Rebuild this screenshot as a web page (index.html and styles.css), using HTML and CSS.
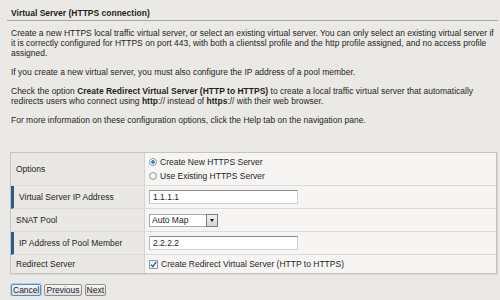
FILE: index.html
```html
<!DOCTYPE html>
<html lang="en">
<head>
    <meta charset="UTF-8">
    <title>Virtual Server (HTTPS connection)</title>
    <link rel="stylesheet" href="styles.css">
</head>
<body>
    <div class="section">
        <h1 class="section-title">Virtual Server (HTTPS connection)</h1>
        <div class="intro">
            <p>Create a new HTTPS local traffic virtual server, or select an existing virtual server. You can only select an existing virtual server if it is correctly configured for HTTPS on port 443, with both a clientssl profile and the http profile assigned, and no access profile assigned.</p>
            <p>If you create a new virtual server, you must also configure the IP address of a pool member.</p>
            <p>Check the option <b>Create Redirect Virtual Server (HTTP to HTTPS)</b> to create a local traffic virtual server that automatically redirects users who connect using <b>http</b>:// instead of <b>https</b>:// with their web browser.</p>
            <p>For more information on these configuration options, click the Help tab on the navigation pane.</p>
        </div>

        <table class="settings">
            <tr class="row-options">
                <td class="label">Options</td>
                <td class="value">
                    <label class="radio-line"><span class="radio checked"></span>Create New HTTPS Server</label>
                    <label class="radio-line"><span class="radio"></span>Use Existing HTTPS Server</label>
                </td>
            </tr>
            <tr>
                <td class="label required">Virtual Server IP Address</td>
                <td class="value"><input type="text" class="text-input" value="1.1.1.1"></td>
            </tr>
            <tr>
                <td class="label">SNAT Pool</td>
                <td class="value">
                    <div class="select-box">
                        <select>
                            <option>Auto Map</option>
                        </select>
                        <span class="select-arrow"></span>
                    </div>
                </td>
            </tr>
            <tr>
                <td class="label required">IP Address of Pool Member</td>
                <td class="value"><input type="text" class="text-input" value="2.2.2.2"></td>
            </tr>
            <tr class="row-last">
                <td class="label">Redirect Server</td>
                <td class="value">
                    <label class="check-line">
                        <span class="checkbox">
                            <svg width="7" height="7" viewBox="0 0 7 7"><path d="M1 3.6 L2.8 5.6 L6.2 0.8" fill="none" stroke="#2d4f9c" stroke-width="1.3"/></svg>
                        </span>Create Redirect Virtual Server (HTTP to HTTPS)
                    </label>
                </td>
            </tr>
        </table>

        <div class="buttons">
            <button class="focused">Cancel</button>
            <button>Previous</button>
            <button>Next</button>
        </div>
    </div>
</body>
</html>
```

FILE: styles.css
```css
body {
    margin: 0;
    padding: 0 2px 0 7px;
    background-color: #ebe9e6;
    color: #1e1e1e;
    font-family: 'Liberation Sans', Arial, sans-serif;
    font-size: 8.5px;
    line-height: 10px;
}

.section-title {
    margin: 0;
    padding: 8px 0 2px 4px;
    font-size: 8.5px;
    font-weight: bold;
    border-bottom: 1px solid #aaa8a5;
}

.intro {
    padding: 7px 4px 0 4px;
}

.intro p {
    margin: 0 0 9px 0;
}

.intro p:last-child {
    margin-bottom: 0;
}

.settings {
    margin: 27px 1px 0 3px;
    width: 487px;
    border: 1px solid #c6c4c0;
    border-spacing: 0;
    box-shadow: 1px 1px 0 #d9d7d3;
}

.settings td {
    box-sizing: border-box;
    height: 23px;
    padding: 0;
    border-bottom: 1px solid #dddbd7;
    vertical-align: middle;
}

.settings .row-options td {
    height: 33px;
}

.settings .row-last td {
    height: 18px;
    border-bottom: none;
}

.settings .label {
    width: 134px;
    padding-left: 5px;
    background-color: #e9e8e4;
    border-right: 1px solid #d6d4d0;
}

.settings .label.required {
    padding-left: 5px;
    border-left: 3px solid #2d5c8a;
}

.settings .value {
    padding-left: 4px;
    background-color: #f6f5f3;
}

.radio-line {
    display: flex;
    align-items: center;
    height: 14px;
}

.radio {
    width: 6px;
    height: 6px;
    margin-right: 3px;
    border: 1px solid #9a9a9a;
    border-radius: 50%;
    background: radial-gradient(circle at 40% 35%, #ffffff, #dcdcdc);
}

.radio.checked {
    background: radial-gradient(circle, #2a6fc0 0, #4b8fd8 1.6px, #ffffff 2.2px, #e2e2e2 100%);
}

.text-input {
    box-sizing: border-box;
    display: block;
    width: 149px;
    height: 14px;
    margin: 0;
    padding: 0 3px;
    border: 1px solid #d2d0cc;
    border-top: 1px solid #8c8c8c;
    border-left: 1px solid #b4b4b4;
    background-color: #ffffff;
    color: #1e1e1e;
    font-family: inherit;
    font-size: 8.5px;
    outline: none;
}

.select-box {
    position: relative;
    width: 69px;
    height: 13px;
}

.select-box select {
    box-sizing: border-box;
    width: 69px;
    height: 13px;
    margin: 0;
    padding: 0 0 0 2px;
    border: 1px solid #a9a9a9;
    background-color: #ffffff;
    color: #1e1e1e;
    font-family: inherit;
    font-size: 8.5px;
    appearance: none;
    -webkit-appearance: none;
    outline: none;
}

.select-arrow {
    position: absolute;
    top: 0;
    right: 0;
    box-sizing: border-box;
    width: 12px;
    height: 13px;
    border: 1px solid #7d7d7d;
    background: linear-gradient(#f4f4f4, #d4d4d4);
}

.select-arrow::after {
    content: '';
    position: absolute;
    top: 4px;
    left: 3px;
    border-left: 2px solid transparent;
    border-right: 2px solid transparent;
    border-top: 3px solid #111111;
}

.check-line {
    display: flex;
    align-items: center;
}

.checkbox {
    display: flex;
    align-items: center;
    justify-content: center;
    box-sizing: border-box;
    width: 9px;
    height: 9px;
    margin-right: 3px;
    border: 1px solid #8e9aa8;
    background: linear-gradient(135deg, #e6ecf5, #ffffff);
}

.buttons {
    display: flex;
    gap: 3px;
    margin: 10px 0 0 4px;
}

.buttons button {
    height: 12px;
    padding: 0 1px;
    border: 1px solid #8f8f8f;
    border-radius: 2px;
    background: linear-gradient(#f7f7f7, #dcdcdc);
    color: #1e1e1e;
    font-family: inherit;
    font-size: 8.5px;
    line-height: 10px;
}

.buttons button.focused {
    border-color: #4f8fd0;
    box-shadow: 0 0 0 1px #a8cdf2;
}
```
